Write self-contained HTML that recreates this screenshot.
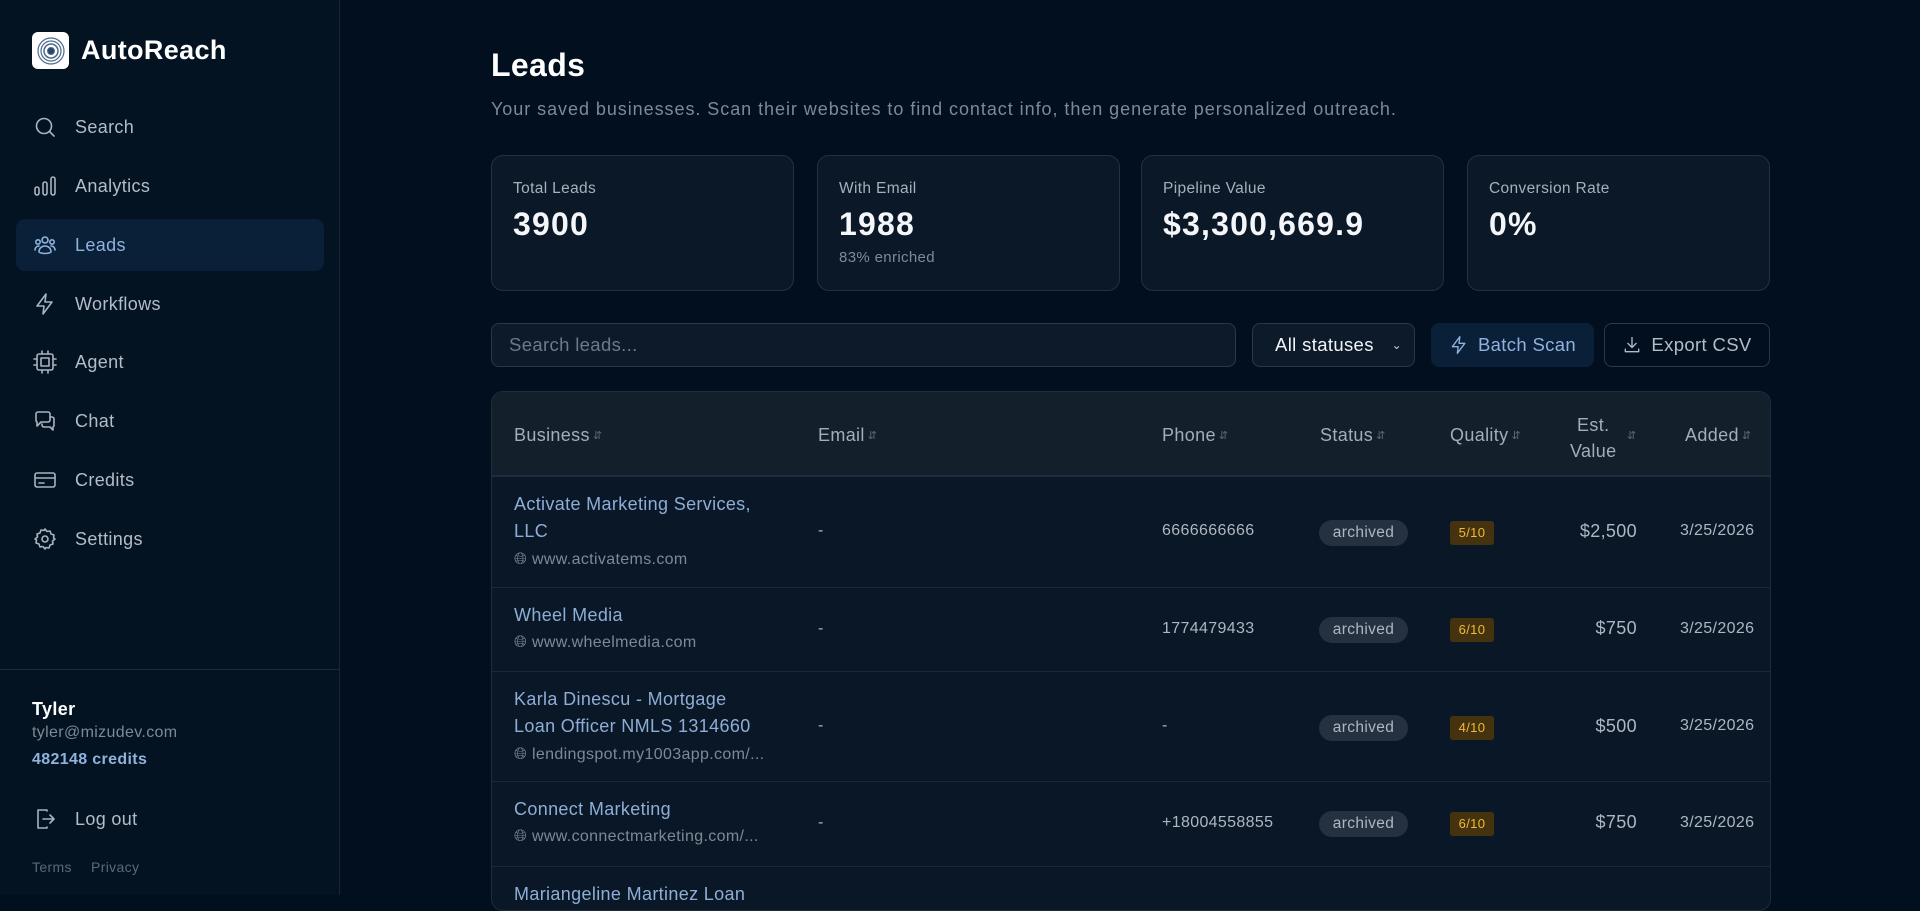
<!DOCTYPE html>
<html><head><meta charset="utf-8"><style>
*{box-sizing:border-box;margin:0;padding:0}
body{width:1920px;height:895px;overflow:hidden;background:#020f1f;font-family:"Liberation Sans",sans-serif;color:#e6ebf2;position:relative;letter-spacing:0.35px}
.abs{position:absolute}
.side{position:absolute;left:0;top:0;width:340px;height:895px;background:#031322;border-right:1px solid #1a2636}
.nav{position:absolute;left:16px;width:308px;height:52px;display:flex;align-items:center;padding-left:17px;font-size:18px;color:#b4bcc7}
.nav svg{width:24px;height:24px;margin-right:18px;stroke:#aab3bf;fill:none;stroke-width:1.6;stroke-linecap:round;stroke-linejoin:round}
.nav.act{background:#0a1f38;border-radius:9px;color:#8fb3dd}
.nav.act svg{stroke:#8fb3dd}
.card{position:absolute;top:155px;width:303px;height:136px;background:#0a1827;border:1px solid #223041;border-radius:12px;padding:0 21px}
.card .l{position:absolute;top:24px;font-size:15.5px;color:#a7b0bb}
.card .v{position:absolute;top:50px;font-size:32px;font-weight:bold;color:#f4f6f9;letter-spacing:1.2px}
.card .s{position:absolute;top:93px;font-size:15px;color:#7f8a97}
.btn{position:absolute;top:323px;height:44px;border-radius:8px;display:flex;align-items:center;justify-content:center;font-size:18.5px}
.tbl{position:absolute;left:491px;top:391px;width:1280px;height:520px;background:#0a1727;border:1px solid #1f2c3b;border-radius:12px;overflow:hidden}
.th{position:absolute;top:0;left:0;right:0;height:85px;background:#141f2c;border-bottom:2px solid #1f2b3a}
.h{position:absolute;font-size:18px;color:#a4adb8;top:33px}
.h i{font-style:normal;font-size:11px;color:#5d6977;margin-left:3px;vertical-align:2px}
.row{position:absolute;left:0;right:0;border-bottom:1px solid #1b2838}
.c{position:absolute;font-size:16px;color:#aeb6c0}
.nm{font-size:18px;color:#8eaed6;line-height:27px}
.url{font-size:16px;color:#7f8995}
.arch{position:absolute;left:827px;width:89px;height:26px;background:#253140;border-radius:13px;color:#aeb6c0;font-size:15.5px;text-align:center;line-height:26px}
.q{position:absolute;left:958px;width:44px;height:24px;background:#45330f;border-radius:3px;color:#f4b83c;font-size:13px;text-align:center;line-height:24px}
</style></head><body>
<div class="side">
  <div class="abs" style="left:32px;top:32px;width:37px;height:37px;background:#fff;border-radius:6px;display:flex;align-items:center;justify-content:center">
    <svg width="30" height="30" viewBox="0 0 30 30" fill="none" stroke="#4d6a8a"><circle cx="15" cy="15" r="13" stroke-width="1.2"/><circle cx="15" cy="15" r="10" stroke-width="1.2"/><circle cx="15" cy="15" r="7" stroke-width="1.5"/><circle cx="15" cy="15" r="3.5" fill="#2b4566"/></svg>
  </div>
  <div class="abs" style="left:81px;top:35px;font-size:27px;font-weight:bold;color:#fff">AutoReach</div>
  <div class="nav" style="top:101px"><svg viewBox="0 0 24 24"><circle cx="11" cy="11" r="7.5"/><path d="M16.5 16.5L21 21"/></svg>Search</div>
  <div class="nav" style="top:160px"><svg viewBox="0 0 24 24"><rect x="2" y="13" width="4" height="8" rx="2"/><rect x="10" y="8" width="4" height="13" rx="2"/><rect x="18" y="3" width="4" height="18" rx="2"/></svg>Analytics</div>
  <div class="nav act" style="top:219px"><svg viewBox="0 0 24 24"><circle cx="12" cy="7" r="3"/><circle cx="5" cy="9" r="2.2"/><circle cx="19" cy="9" r="2.2"/><path d="M6 19c0-4 3-6 6-6s6 2 6 6c-3 2-9 2-12 0zM2 17c0-2 1.5-4 4-4M22 17c0-2-1.5-4-4-4"/></svg>Leads</div>
  <div class="nav" style="top:278px"><svg viewBox="0 0 24 24"><path d="M13 2L4 14h7l-1 8 9-12h-7z"/></svg>Workflows</div>
  <div class="nav" style="top:336px"><svg viewBox="0 0 24 24"><rect x="4" y="4" width="16" height="16" rx="2"/><rect x="8" y="8" width="8" height="8"/><path d="M9 1v3M15 1v3M9 20v3M15 20v3M1 9h3M1 15h3M20 9h3M20 15h3"/></svg>Agent</div>
  <div class="nav" style="top:395px"><svg viewBox="0 0 24 24"><path d="M3 5a2 2 0 0 1 2-2h10a2 2 0 0 1 2 2v6a2 2 0 0 1-2 2H8l-4 4v-4a2 2 0 0 1-1-2z"/><path d="M17 8h2a2 2 0 0 1 2 2v6a2 2 0 0 1-1 2v3l-3-3h-6a2 2 0 0 1-2-2v-1"/></svg>Chat</div>
  <div class="nav" style="top:454px"><svg viewBox="0 0 24 24"><rect x="2" y="5" width="20" height="14" rx="2"/><path d="M2 10h20M6 15h5"/></svg>Credits</div>
  <div class="nav" style="top:513px"><svg viewBox="0 0 24 24"><circle cx="12" cy="12" r="3"/><path d="M12 2l2 2.5 3-.5 1 3 3 1-.5 3L22 12l-2.5 2 .5 3-3 1-1 3-3-.5L12 22l-2-2.5-3 .5-1-3-3-1 .5-3L2 12l2.5-2L4 7l3-1 1-3 3 .5z"/></svg>Settings</div>
  <div class="abs" style="left:0;top:669px;width:340px;height:1px;background:#1c2a3a"></div>
  <div class="abs" style="left:32px;top:699px;font-size:18px;font-weight:bold;color:#fff">Tyler</div>
  <div class="abs" style="left:32px;top:724px;font-size:16px;color:#7f8995">tyler@mizudev.com</div>
  <div class="abs" style="left:32px;top:751px;font-size:16px;font-weight:bold;color:#8fb3dd">482148 credits</div>
  <div class="nav" style="top:793px"><svg viewBox="0 0 24 24"><path d="M14 4V3H5v18h9v-1"/><path d="M10 12h11M17 8l4 4-4 4"/></svg>Log out</div>
  <div class="abs" style="left:32px;top:859px;font-size:14px;color:#5d6875">Terms</div>
  <div class="abs" style="left:91px;top:859px;font-size:14px;color:#5d6875">Privacy</div>
</div>

<div class="abs" style="left:491px;top:47px;font-size:32px;font-weight:bold;color:#fff">Leads</div>
<div class="abs" style="left:491px;top:99px;font-size:18px;color:#7f8995;letter-spacing:0.95px">Your saved businesses. Scan their websites to find contact info, then generate personalized outreach.</div>

<div class="card" style="left:491px"><div class="l">Total Leads</div><div class="v">3900</div></div>
<div class="card" style="left:817px"><div class="l">With Email</div><div class="v">1988</div><div class="s">83% enriched</div></div>
<div class="card" style="left:1141px"><div class="l">Pipeline Value</div><div class="v">$3,300,669.9</div></div>
<div class="card" style="left:1467px"><div class="l">Conversion Rate</div><div class="v">0%</div></div>

<div class="btn" style="left:491px;width:745px;background:#0c1a2a;border:1px solid #2a3848;justify-content:flex-start;padding-left:17px;color:#6f7a87">Search leads...</div>
<div class="btn" style="left:1252px;width:163px;background:#0c1a2a;border:1px solid #2a3848;color:#f2f4f7;justify-content:flex-start;padding-left:22px">All statuses<span style="position:absolute;right:12px;font-size:12px;color:#ccd">&#8964;</span></div>
<div class="btn" style="left:1431px;width:163px;background:#0a1f38;color:#8fb3dd"><svg width="20" height="20" viewBox="0 0 24 24" fill="none" stroke="#8fb3dd" stroke-width="1.6" stroke-linejoin="round" style="margin-right:9px"><path d="M13 2L4 14h7l-1 8 9-12h-7z"/></svg>Batch Scan</div>
<div class="btn" style="left:1604px;width:166px;border:1px solid #2a3848;color:#b4bcc7"><svg width="20" height="20" viewBox="0 0 24 24" fill="none" stroke="#b4bcc7" stroke-width="1.6" stroke-linecap="round" stroke-linejoin="round" style="margin-right:9px"><path d="M12 3v12M7 10l5 5 5-5M4 17v3h16v-3"/></svg>Export CSV</div>

<div class="tbl">
  <div class="th">
    <div class="h" style="left:22px">Business<i>&#8693;</i></div>
    <div class="h" style="left:326px">Email<i>&#8693;</i></div>
    <div class="h" style="left:670px">Phone<i>&#8693;</i></div>
    <div class="h" style="left:828px">Status<i>&#8693;</i></div>
    <div class="h" style="left:958px">Quality<i>&#8693;</i></div>
    <div class="h" style="left:1078px;top:20px;line-height:26px;text-align:center">Est.<br>Value</div><div class="h" style="left:1132px"><i>&#8693;</i></div>
    <div class="h" style="left:1193px">Added<i>&#8693;</i></div>
  </div>
  <div class="row" style="top:85px;height:111px">
    <div class="c nm" style="left:22px;top:14px">Activate Marketing Services,<br>LLC</div>
    <div class="c url" style="left:22px;top:74px">&#127760;&#xFE0E; www.activatems.com</div>
    <div class="c" style="left:326px;top:45px">-</div>
    <div class="c" style="left:670px;top:45px">6666666666</div>
    <div class="arch" style="top:43px">archived</div><div class="q" style="top:44px">5/10</div>
    <div class="c" style="right:133px;top:44px;font-size:18px">$2,500</div>
    <div class="c" style="left:1188px;top:45px">3/25/2026</div>
  </div>
  <div class="row" style="top:196px;height:84px">
    <div class="c nm" style="left:22px;top:14px">Wheel Media</div>
    <div class="c url" style="left:22px;top:46px">&#127760;&#xFE0E; www.wheelmedia.com</div>
    <div class="c" style="left:326px;top:32px">-</div>
    <div class="c" style="left:670px;top:32px">1774479433</div>
    <div class="arch" style="top:29px">archived</div><div class="q" style="top:30px">6/10</div>
    <div class="c" style="right:133px;top:30px;font-size:18px">$750</div>
    <div class="c" style="left:1188px;top:32px">3/25/2026</div>
  </div>
  <div class="row" style="top:280px;height:110px">
    <div class="c nm" style="left:22px;top:14px">Karla Dinescu - Mortgage<br>Loan Officer NMLS 1314660</div>
    <div class="c url" style="left:22px;top:74px">&#127760;&#xFE0E; lendingspot.my1003app.com/...</div>
    <div class="c" style="left:326px;top:45px">-</div>
    <div class="c" style="left:670px;top:45px">-</div>
    <div class="arch" style="top:43px">archived</div><div class="q" style="top:44px">4/10</div>
    <div class="c" style="right:133px;top:44px;font-size:18px">$500</div>
    <div class="c" style="left:1188px;top:45px">3/25/2026</div>
  </div>
  <div class="row" style="top:390px;height:85px">
    <div class="c nm" style="left:22px;top:14px">Connect Marketing</div>
    <div class="c url" style="left:22px;top:46px">&#127760;&#xFE0E; www.connectmarketing.com/...</div>
    <div class="c" style="left:326px;top:32px">-</div>
    <div class="c" style="left:670px;top:32px">+18004558855</div>
    <div class="arch" style="top:29px">archived</div><div class="q" style="top:30px">6/10</div>
    <div class="c" style="right:133px;top:30px;font-size:18px">$750</div>
    <div class="c" style="left:1188px;top:32px">3/25/2026</div>
  </div>
  <div class="row" style="top:475px;height:60px;border:none">
    <div class="c nm" style="left:22px;top:14px">Mariangeline Martinez Loan</div>
  </div>
</div>
</body></html>
